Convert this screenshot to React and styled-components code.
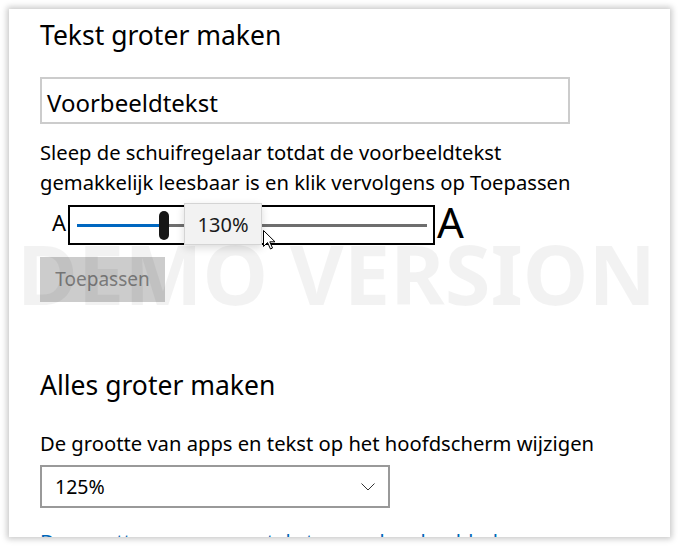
import React from "react";
import styled, { createGlobalStyle } from "styled-components";

const Global = createGlobalStyle`
  html, body { margin: 0; padding: 0; background: #ffffff; }
  body { font-family: "Noto Sans", "Open Sans", sans-serif; color: #000; }
`;

const Page = styled.div`
  width: 678px;
  height: 546px;
  padding: 9px 8px 9px 9px;
  box-sizing: border-box;
`;

const Window = styled.div`
  position: relative;
  height: 528px;
  background: #fff;
  box-shadow: 0 0 6px 2px rgba(0, 0, 0, 0.22);
  overflow: hidden;
`;

const Content = styled.div`
  display: flex;
  flex-direction: column;
  align-items: flex-start;
  padding: 9px 0 0 31px;
`;

const Heading = styled.h2`
  margin: ${(p) => p.$top}px 0 0 0;
  font-size: 26.5px;
  line-height: 34px;
  font-weight: 400;
  white-space: nowrap;
`;

const SampleInput = styled.div`
  margin-top: 25px;
  width: 530px;
  height: 47px;
  box-sizing: border-box;
  border: 2px solid #cccccc;
  padding: 4px 0 0 5px;
  font-size: 24px;
  line-height: 39px;
`;

const Text = styled.p`
  margin: ${(p) => p.$top}px 0 0 0;
  font-size: 20.2px;
  line-height: 30px;
  white-space: nowrap;
`;

const SliderRow = styled.div`
  margin-top: 8px;
  display: flex;
  align-items: flex-start;
  height: 40px;
  padding-left: 12px;
`;

const SmallA = styled.span`
  font-size: 22px;
  line-height: 34px;
  margin-right: 2px;
`;

const BigA = styled.span`
  font-size: 42px;
  line-height: 34px;
  margin-left: 2px;
`;

const SliderBox = styled.div`
  position: relative;
  width: 367px;
  height: 40px;
  box-sizing: border-box;
  border: 2px solid #000;
  display: flex;
  align-items: center;
  padding: 0 6px 0 7px;
`;

const Track = styled.div`
  height: 3px;
  background: ${(p) => (p.$active ? "#0067c0" : "#6e6e6e")};
  flex: ${(p) => (p.$active ? "0 0 82px" : "1 1 auto")};
`;

const Thumb = styled.div`
  width: 10px;
  height: 29px;
  border-radius: 5px;
  background: #171717;
  flex: none;
`;

const Tooltip = styled.div`
  position: absolute;
  left: 114px;
  top: -4px;
  width: 78px;
  height: 42px;
  box-sizing: border-box;
  background: #f2f2f2;
  border: 1px solid #d4d4d4;
  box-shadow: 0 3px 8px rgba(0, 0, 0, 0.14);
  display: flex;
  align-items: center;
  justify-content: center;
  font-size: 20px;
  color: #1a1a1a;
`;

const Cursor = styled.svg`
  position: absolute;
  left: 193px;
  top: 23px;
`;

const ApplyButton = styled.button`
  margin-top: 12px;
  width: 125px;
  height: 45px;
  border: none;
  padding: 0;
  background: #cccccc;
  color: #7a7a7a;
  font-family: inherit;
  font-size: 19px;
  line-height: 45px;
`;

const Select = styled.div`
  margin-top: 7px;
  width: 350px;
  height: 43px;
  box-sizing: border-box;
  border: 2px solid #999999;
  display: flex;
  align-items: center;
  justify-content: space-between;
  padding: 0 13px 0 13px;
  font-size: 19.5px;
`;

const Link = styled.a`
  margin-top: 18px;
  font-size: 20.2px;
  line-height: 30px;
  color: #0067b8;
  text-decoration: none;
  white-space: nowrap;
`;

const Watermark = styled.div`
  position: absolute;
  left: 0;
  right: 0;
  top: 222px;
  padding-right: 6px;
  text-align: center;
  font-size: 83px;
  line-height: 83px;
  font-weight: 700;
  color: rgba(0, 0, 0, 0.05);
  white-space: nowrap;
  pointer-events: none;
`;

export default function App() {
  return (
    <>
      <Global />
      <Page>
        <Window>
          <Content>
            <Heading $top={0}>Tekst groter maken</Heading>
            <SampleInput>Voorbeeldtekst</SampleInput>
            <Text $top={13}>
              Sleep de schuifregelaar totdat de voorbeeldtekst
              <br />
              gemakkelijk leesbaar is en klik vervolgens op Toepassen
            </Text>
            <SliderRow>
              <SmallA>A</SmallA>
              <SliderBox>
                <Track $active />
                <Thumb />
                <Track />
                <Tooltip>130%</Tooltip>
                <Cursor width="13" height="20" viewBox="0 0 13 20">
                  <path
                    d="M0.5 0.5 L0.5 16.5 L4.5 12.5 L7.5 19 L9.5 18 L6.8 11.8 L12 11.8 Z"
                    fill="#fff"
                    stroke="#000"
                    strokeWidth="1"
                    strokeLinejoin="miter"
                  />
                </Cursor>
              </SliderBox>
              <BigA>A</BigA>
            </SliderRow>
            <ApplyButton>Toepassen</ApplyButton>
            <Heading $top={66}>Alles groter maken</Heading>
            <Text $top={26}>De grootte van apps en tekst op het hoofdscherm wijzigen</Text>
            <Select>
              <span>125%</span>
              <svg width="14" height="8" viewBox="0 0 14 8">
                <polyline points="0.5,0.5 7,7 13.5,0.5" fill="none" stroke="#333" strokeWidth="1" />
              </svg>
            </Select>
            <Link href="#">De grootte van apps en tekst op andere beeldschermen</Link>
          </Content>
          <Watermark>DEMO VERSION</Watermark>
        </Window>
      </Page>
    </>
  );
}
